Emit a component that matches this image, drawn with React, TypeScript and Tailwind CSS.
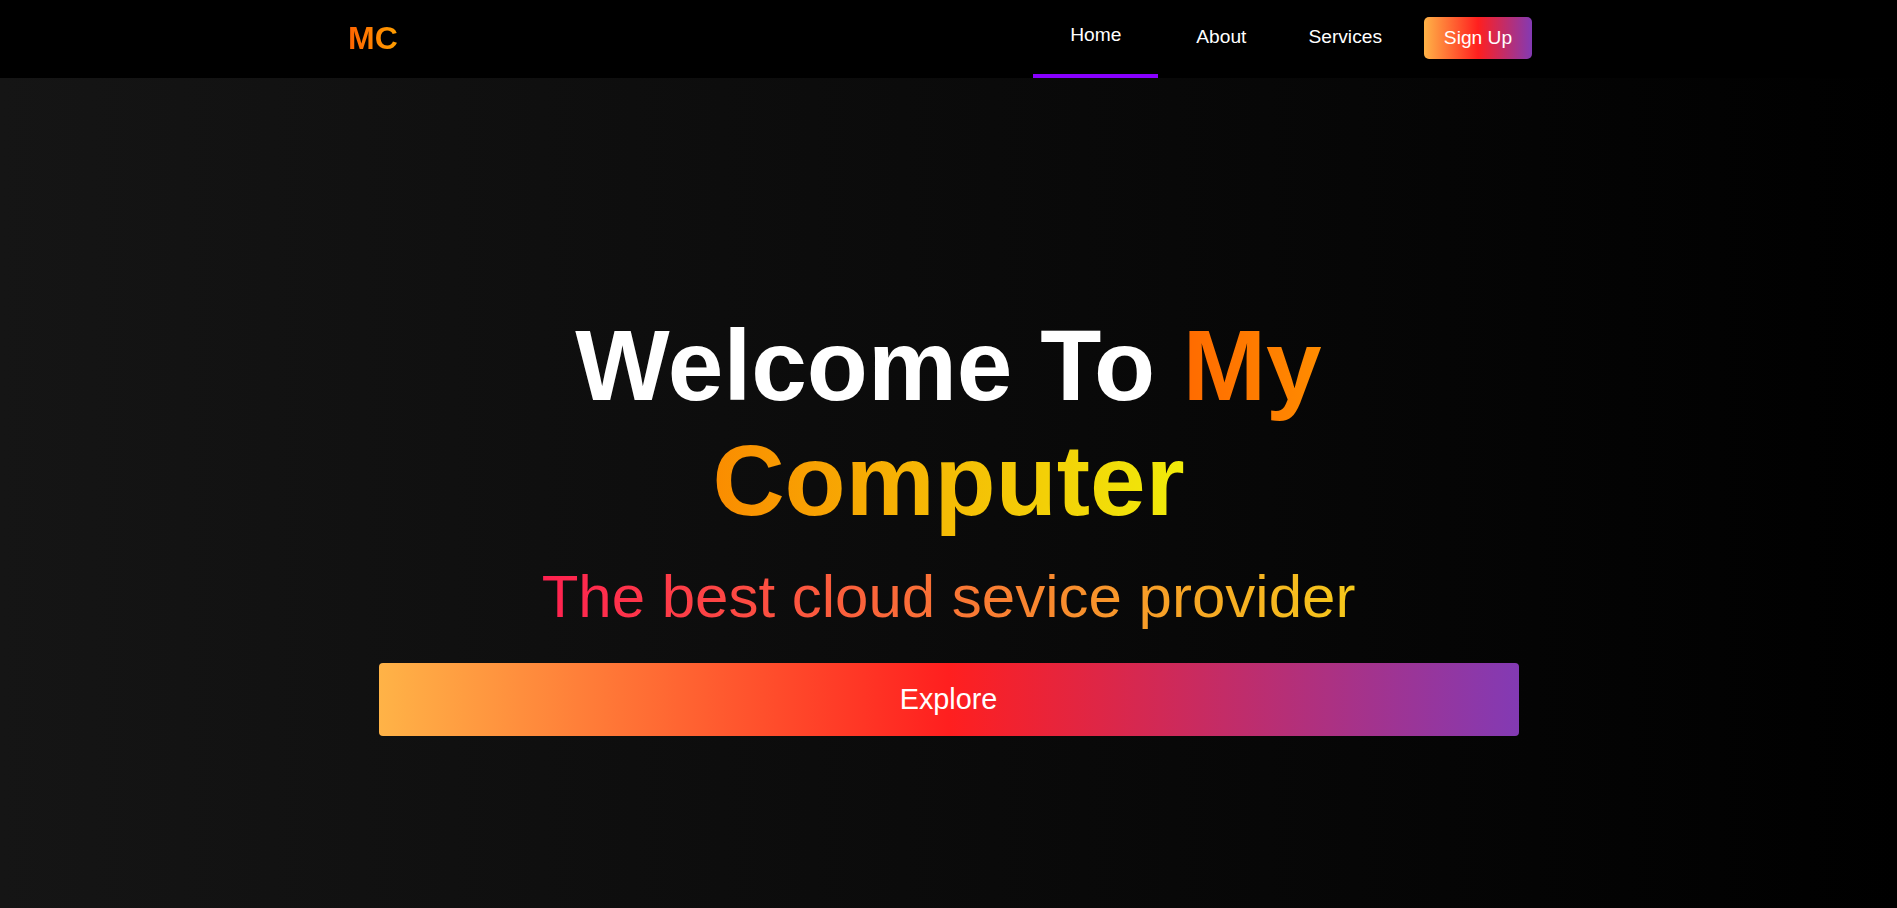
import React from "react";

export default function App() {
  const font = { fontFamily: '"Liberation Sans", Arial, sans-serif' };
  return (
    <div className="min-h-[908px] w-full bg-black text-white" style={font}>
      <nav className="flex h-[78px] items-stretch bg-black pl-[348px]">
        <div className="flex items-center pb-[2px]">
          <span className="bg-linear-to-r/srgb from-[#ff6200] to-[#ffa000] bg-clip-text text-[32px] font-bold leading-[48px] text-transparent">
            MC
          </span>
        </div>
        <div className="ml-auto flex items-stretch pr-[365px]">
          <a className="flex w-[125px] items-center justify-center border-b-4 border-[#8800ff] pb-[3px] text-[19.2px] leading-[28.8px] text-white">
            Home
          </a>
          <a className="ml-[38px] flex items-center pb-[3px] text-[19.2px] leading-[28.8px] text-white">
            About
          </a>
          <a className="ml-[62px] flex items-center pb-[3px] text-[19.2px] leading-[28.8px] text-white">
            Services
          </a>
          <div className="ml-[42px] flex items-start pt-[17px]">
            <button
              className="flex h-[42px] w-[108px] items-center justify-center rounded-[5px] bg-linear-to-r/srgb from-[#ffb347] via-[#ff1f1f] to-[#833ab4] text-[19.2px] leading-[28.8px] text-white"
              style={font}
            >
              Sign Up
            </button>
          </div>
        </div>
      </nav>
      <section className="flex min-h-[830px] flex-col items-center bg-linear-to-r/srgb from-[#151515] to-black pt-[230px]">
        <h1 className="w-[1140px] text-center text-[100px] font-bold leading-[115px] text-white">
          Welcome To{" "}
          <span className="bg-linear-to-r/srgb from-[#ff6a00] to-[#ff8c00] bg-clip-text text-transparent">
            My
          </span>{" "}
          <span className="bg-linear-to-r/srgb from-[#fa8c00] to-[#f0ec0a] bg-clip-text text-transparent">
            Computer
          </span>
        </h1>
        <p className="mt-[24px] text-center text-[60px] leading-[69px]">
          <span className="inline-block bg-linear-to-r/srgb from-[#ff2150] to-[#f5c81a] bg-clip-text text-transparent">
            The best cloud sevice provider
          </span>
        </p>
        <button
          className="mt-[32px] flex h-[73px] w-[1140px] items-center justify-center rounded-[4px] bg-linear-to-r/srgb from-[#ffb347] via-[#ff1f1f] to-[#833ab4] text-[28.8px] leading-[43px] text-white"
          style={font}
        >
          Explore
        </button>
      </section>
    </div>
  );
}
